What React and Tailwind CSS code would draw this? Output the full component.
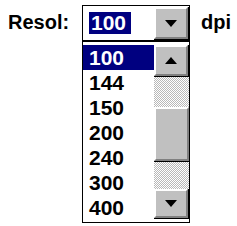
import React from "react";

const font = { fontFamily: '"Liberation Sans", Arial, sans-serif' };

function Arrow({ up }) {
  return (
    <svg width="12" height="7" viewBox="0 0 12 7">
      {up ? (
        <polygon points="6,0 12,7 0,7" fill="#000" />
      ) : (
        <polygon points="0,0 12,0 6,7" fill="#000" />
      )}
    </svg>
  );
}

function Btn({ up, className }) {
  return (
    <div className={`bg-[#c0c0c0] border-b border-r border-black ${className}`}>
      <div className="w-full h-full border-t-2 border-l-2 border-t-white border-l-white border-b-2 border-r-2 border-b-[#808080] border-r-[#808080] flex items-center justify-center">
        <Arrow up={up} />
      </div>
    </div>
  );
}

const track =
  "bg-[repeating-conic-gradient(#b8b8b8_0_25%,#ffffff_0_50%)] bg-[length:2px_2px]";

export default function App() {
  const items = ["100", "144", "150", "200", "240", "300", "400"];
  return (
    <div className="w-[237px] h-[226px] bg-white text-black" style={font}>
      <div className="flex items-start pt-[5px]">
        <div className="w-[82px] pl-[8px] mt-[6px] text-[20px] font-bold leading-[23px]">
          Resol:
        </div>
        <div className="w-[108px] h-[36px] border border-black bg-white flex items-start">
          <div className="ml-[6px] mt-[6px] w-[42px] h-[22px] bg-[#000080] text-white text-[21px] font-bold leading-[22px] pl-[2px]">
            100
          </div>
          <Btn className="ml-auto mt-[1px] w-[35px] h-[33px]" />
        </div>
        <div className="ml-[11px] mt-[6px] text-[20px] font-bold leading-[23px]">
          dpi
        </div>
      </div>
      <div className="ml-[82px] w-[108px] h-[182px] border border-black flex">
        <div className="flex-1 pt-[3px]">
          {items.map((it, i) => (
            <div
              key={it}
              className={`h-[25px] pl-[6px] text-[21px] font-bold leading-[25px] ${
                i === 0 ? "bg-[#000080] text-white" : ""
              }`}
            >
              {it}
            </div>
          ))}
        </div>
        <div className="w-[35px] my-[3px] flex flex-col">
          <Btn up className="h-[32px]" />
          <div className={`h-[30px] ${track}`} />
          <div className="h-[55px] bg-[#c0c0c0] border-b border-black">
            <div className="w-full h-full border-t-2 border-l-2 border-t-white border-l-white border-b-2 border-r-2 border-b-[#808080] border-r-[#808080]" />
          </div>
          <div className={`h-[27px] ${track}`} />
          <Btn className="h-[30px]" />
        </div>
      </div>
    </div>
  );
}
